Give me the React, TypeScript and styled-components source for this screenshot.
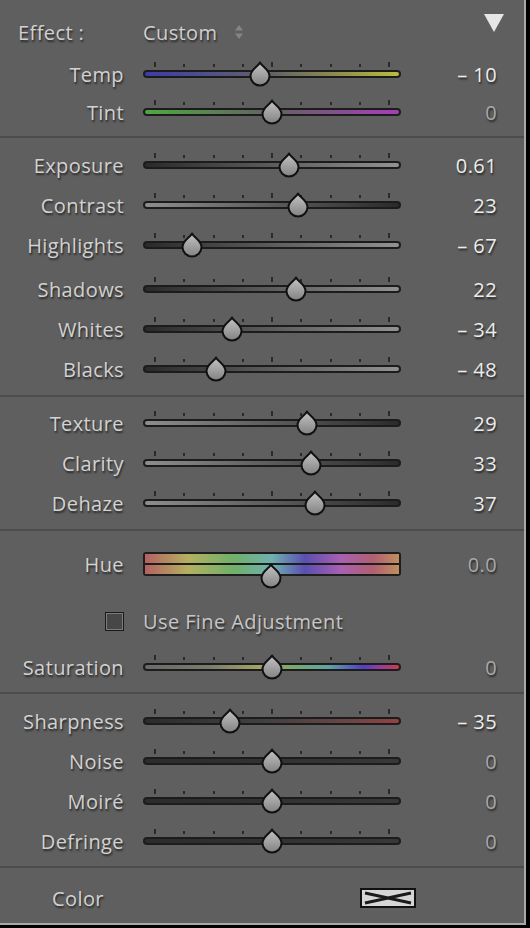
import React from "react";
import styled, { createGlobalStyle } from "styled-components";

const GlobalStyle = createGlobalStyle`
  html, body {
    margin: 0;
    padding: 0;
    background: #000;
    min-height: 100%;
  }
  body {
    font-family: "Open Sans", "Liberation Sans", sans-serif;
  }
`;

const Panel = styled.div`
  width: 524px;
  height: 923px;
  background: #5f5f5f;
  border-right: 2px solid #a8a8a8;
  border-bottom: 2px solid #a8a8a8;
  display: flex;
  flex-direction: column;
`;

const Header = styled.div`
  height: 55px;
  box-sizing: border-box;
  padding: 9px 19px 0 18px;
  display: flex;
  align-items: center;
`;

const Text = styled.span`
  font-size: 20px;
  letter-spacing: 0.4px;
  white-space: nowrap;
  text-shadow: 1px 2px 2px rgba(0, 0, 0, 0.6);
`;

const HeaderLabel = styled(Text)`
  width: 125px;
  color: #d0d0d0;
`;

const Preset = styled(Text)`
  color: #cfcfcf;
`;

const Stepper = styled.svg`
  margin-left: 17px;
`;

const Collapse = styled.svg`
  margin-left: auto;
  align-self: flex-start;
  margin-top: 4px;
`;

const Section = styled.div<{ $pt: number; $pb: number }>`
  padding-top: ${(p) => p.$pt}px;
  padding-bottom: ${(p) => p.$pb}px;
  display: flex;
  flex-direction: column;
`;

const Divider = styled.div`
  height: 2px;
  background: #4c4c4c;
`;

const Row = styled.div<{ $h?: number; $mt?: number }>`
  display: grid;
  grid-template-columns: 124px 258px 1fr;
  column-gap: 19px;
  align-items: center;
  height: ${(p) => p.$h ?? 40}px;
  margin-top: ${(p) => p.$mt ?? 0}px;
  padding-right: 27px;
`;

const Label = styled(Text)`
  text-align: right;
  color: #d2d2d2;
`;

const Value = styled(Text)<{ $dim?: boolean }>`
  text-align: right;
  color: ${(p) => (p.$dim ? "#a8a8a8" : "#ececec")};
`;

const SliderCell = styled.div`
  position: relative;
  height: 24px;
  display: flex;
  flex-direction: column;
`;

const Ticks = styled.div`
  height: 5px;
  margin-bottom: 3px;
  padding: 0 11px;
  display: flex;
  justify-content: space-between;
  align-items: flex-end;
`;

const Tick = styled.div<{ $tall: boolean }>`
  width: 2px;
  height: ${(p) => (p.$tall ? 5 : 3)}px;
  background: #2a2a2a;
`;

const Track = styled.div<{ $fill: string }>`
  height: 8px;
  box-sizing: border-box;
  border: 2px solid #1c1c1c;
  border-radius: 4px;
  background: ${(p) => p.$fill};
`;

const ThumbSvg = styled.svg`
  position: absolute;
  top: -1px;
`;

const HueCell = styled.div`
  position: relative;
  height: 24px;
  box-sizing: border-box;
  border: 2px solid #1e1e1e;
  border-radius: 3px;
  display: flex;
  flex-direction: column;
`;

const HueBand = styled.div`
  flex: 1;
  background: linear-gradient(
    90deg,
    #b46262 0%,
    #b4b060 17%,
    #6fb06a 35%,
    #70b0b0 50%,
    #5a4fb0 63%,
    #a860b0 77%,
    #b06070 90%,
    #c0905e 100%
  );
`;

const HueSplit = styled.div`
  height: 2px;
  background: #1e1e1e;
`;

const HueThumbWrap = styled.div`
  position: absolute;
  left: -2px;
  right: -2px;
  top: 10px;
  height: 0;
`;

const CheckRow = styled.div`
  display: flex;
  align-items: center;
  height: 34px;
  margin-top: 20px;
  padding-left: 105px;
  gap: 19px;
`;

const Checkbox = styled.div`
  width: 19px;
  height: 19px;
  box-sizing: border-box;
  background: #474747;
  border: 1px solid #1a1a1a;
  box-shadow: inset 0 0 0 1px #7c7c7c;
`;

const CheckLabel = styled(Text)`
  color: #c6c6c6;
`;

const ColorRow = styled.div`
  display: flex;
  align-items: center;
  height: 40px;
  margin-top: 10px;
  padding-left: 52px;
  padding-right: 108px;
`;

const Swatch = styled.svg`
  margin-left: auto;
  display: block;
`;

const fills = {
  temp: "linear-gradient(90deg, #3c3caa 0%, #50508a 25%, #626266 50%, #8c8c4e 75%, #bcbc3e 100%)",
  tint: "linear-gradient(90deg, #4ea842 0%, #5a8452 25%, #666066 50%, #84508e 75%, #a63eb6 100%)",
  darkLight: "linear-gradient(90deg, #2a2a2a 0%, #5c5c5c 50%, #929292 100%)",
  lightDark: "linear-gradient(90deg, #8e8e8e 0%, #5c5c5c 50%, #2a2a2a 100%)",
  sat: "linear-gradient(90deg, #6a6a6a 0%, #7a7a6e 25%, #a4a462 45%, #74a872 60%, #62a4a4 72%, #5040c4 86%, #9a3c9a 93%, #cc3c48 100%)",
  sharp: "linear-gradient(90deg, #2c2c2c 0%, #404040 45%, #6a4646 80%, #964040 100%)",
  dark: "linear-gradient(90deg, #2c2c2c 0%, #383838 100%)",
};

type Slider = {
  label: string;
  value: string;
  pos: number; // -100..100
  fill: string;
  dim?: boolean;
  mt?: number;
  h?: number;
};

function Thumb({ pos }: { pos: number }) {
  const x = 10 + ((pos + 100) / 200) * 238;
  return (
    <ThumbSvg width="24" height="26" viewBox="0 0 24 26" style={{ left: x - 12 }}>
      <defs>
        <linearGradient id="thumbGrad" x1="0" y1="0" x2="0" y2="1">
          <stop offset="0" stopColor="#c4c4c4" />
          <stop offset="1" stopColor="#828282" />
        </linearGradient>
      </defs>
      <path
        d="M12 1.5 C14 5.5 21.5 8.5 21.5 15 A9.5 9.5 0 0 1 2.5 15 C2.5 8.5 10 5.5 12 1.5 Z"
        fill="url(#thumbGrad)"
        stroke="#111"
        strokeWidth="2"
        strokeLinejoin="round"
      />
    </ThumbSvg>
  );
}

function SliderRow({ label, value, pos, fill, dim, mt, h }: Slider) {
  return (
    <Row $mt={mt} $h={h}>
      <Label>{label}</Label>
      <SliderCell>
        <Ticks>
          {Array.from({ length: 9 }).map((_, i) => (
            <Tick key={i} $tall={i % 4 === 0} />
          ))}
        </Ticks>
        <Track $fill={fill} />
        <Thumb pos={pos} />
      </SliderCell>
      <Value $dim={dim}>{value}</Value>
    </Row>
  );
}

const whiteBalance: Slider[] = [
  { label: "Temp", value: "– 10", pos: -10, fill: fills.temp, h: 38 },
  { label: "Tint", value: "0", pos: 0, fill: fills.tint, dim: true, h: 38 },
];

const tone: Slider[] = [
  { label: "Exposure", value: "0.61", pos: 14.5, fill: fills.darkLight },
  { label: "Contrast", value: "23", pos: 22, fill: fills.lightDark },
  { label: "Highlights", value: "– 67", pos: -67, fill: fills.darkLight },
  { label: "Shadows", value: "22", pos: 20.5, fill: fills.darkLight, mt: 4 },
  { label: "Whites", value: "– 34", pos: -34, fill: fills.darkLight },
  { label: "Blacks", value: "– 48", pos: -47, fill: fills.darkLight },
];

const presence: Slider[] = [
  { label: "Texture", value: "29", pos: 29.5, fill: fills.lightDark },
  { label: "Clarity", value: "33", pos: 33, fill: fills.lightDark },
  { label: "Dehaze", value: "37", pos: 36.5, fill: fills.lightDark },
];

const detail: Slider[] = [
  { label: "Sharpness", value: "– 35", pos: -35, fill: fills.sharp },
  { label: "Noise", value: "0", pos: 0, fill: fills.dark, dim: true },
  { label: "Moiré", value: "0", pos: 0, fill: fills.dark, dim: true },
  { label: "Defringe", value: "0", pos: 0, fill: fills.dark, dim: true },
];

export default function App() {
  return (
    <>
      <GlobalStyle />
      <Panel>
        <Header>
          <HeaderLabel>Effect :</HeaderLabel>
          <Preset>Custom</Preset>
          <Stepper width="10" height="16" viewBox="0 0 10 16">
            <path d="M5 1 L9 6.5 H1 Z" fill="#858585" />
            <path d="M5 15 L9 9.5 H1 Z" fill="#858585" />
          </Stepper>
          <Collapse width="22" height="20" viewBox="0 0 22 20">
            <path d="M1 1 H21 L11 19 Z" fill="#e6e6e6" />
          </Collapse>
        </Header>

        <Section $pt={0} $pb={5}>
          {whiteBalance.map((s) => (
            <SliderRow key={s.label} {...s} />
          ))}
        </Section>
        <Divider />

        <Section $pt={7} $pb={6}>
          {tone.map((s) => (
            <SliderRow key={s.label} {...s} />
          ))}
        </Section>
        <Divider />

        <Section $pt={6} $pb={6}>
          {presence.map((s) => (
            <SliderRow key={s.label} {...s} />
          ))}
        </Section>
        <Divider />

        <Section $pt={13} $pb={5}>
          <Row>
            <Label>Hue</Label>
            <HueCell>
              <HueBand />
              <HueSplit />
              <HueBand />
              <HueThumbWrap>
                <Thumb pos={-0.5} />
              </HueThumbWrap>
            </HueCell>
            <Value $dim>0.0</Value>
          </Row>
          <CheckRow>
            <Checkbox />
            <CheckLabel>Use Fine Adjustment</CheckLabel>
          </CheckRow>
          <SliderRow label="Saturation" value="0" pos={0} fill={fills.sat} dim mt={9} />
        </Section>
        <Divider />

        <Section $pt={7} $pb={5}>
          {detail.map((s) => (
            <SliderRow key={s.label} {...s} />
          ))}
        </Section>
        <Divider />

        <ColorRow>
          <Label>Color</Label>
          <Swatch width="56" height="20" viewBox="0 0 56 20">
            <rect x="1" y="1" width="54" height="18" fill="#d6d6d6" stroke="#111" strokeWidth="2" />
            <path d="M5 5 L28 10 L51 5 M5 15 L28 10 L51 15" stroke="#1a1a1a" strokeWidth="3" fill="none" />
          </Swatch>
        </ColorRow>
      </Panel>
    </>
  );
}
